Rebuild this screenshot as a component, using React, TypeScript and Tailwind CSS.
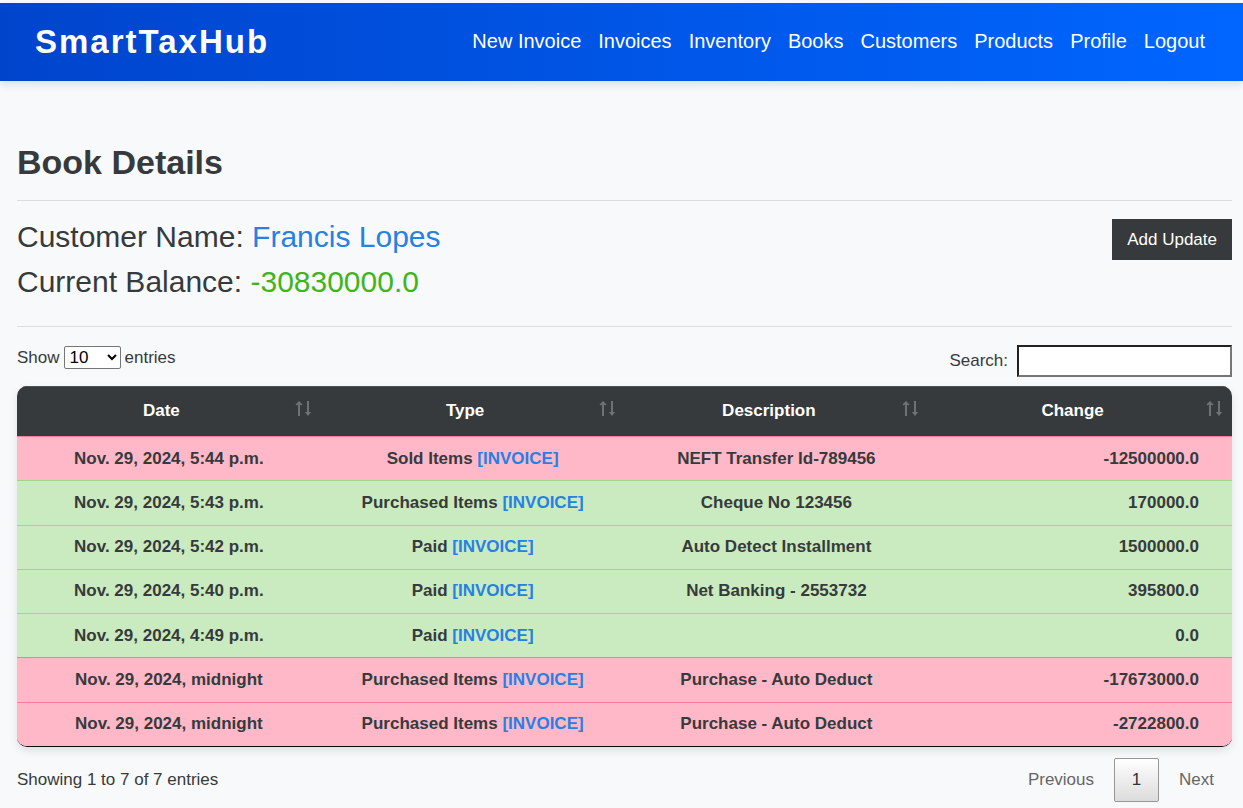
import React from "react";

const navLinks = [
  "New Invoice",
  "Invoices",
  "Inventory",
  "Books",
  "Customers",
  "Products",
  "Profile",
  "Logout",
];

type Entry = {
  date: string;
  type: string;
  description: string;
  change: string;
  tone: "danger" | "success";
};

const entries: Entry[] = [
  { date: "Nov. 29, 2024, 5:44 p.m.", type: "Sold Items", description: "NEFT Transfer Id-789456", change: "-12500000.0", tone: "danger" },
  { date: "Nov. 29, 2024, 5:43 p.m.", type: "Purchased Items", description: "Cheque No 123456", change: "170000.0", tone: "success" },
  { date: "Nov. 29, 2024, 5:42 p.m.", type: "Paid", description: "Auto Detect Installment", change: "1500000.0", tone: "success" },
  { date: "Nov. 29, 2024, 5:40 p.m.", type: "Paid", description: "Net Banking - 2553732", change: "395800.0", tone: "success" },
  { date: "Nov. 29, 2024, 4:49 p.m.", type: "Paid", description: "", change: "0.0", tone: "success" },
  { date: "Nov. 29, 2024, midnight", type: "Purchased Items", description: "Purchase - Auto Deduct", change: "-17673000.0", tone: "danger" },
  { date: "Nov. 29, 2024, midnight", type: "Purchased Items", description: "Purchase - Auto Deduct", change: "-2722800.0", tone: "danger" },
];

const rowTone = {
  danger: "bg-[#ffb8c8] *:border-[#ff7a98]",
  success: "bg-[#c9ebbf] *:border-[#9bd986]",
};

function SortIcon() {
  return (
    <svg width="16" height="16" viewBox="0 0 16 16" className="text-[#6f7173]" aria-hidden="true">
      <path d="M3 2h2v13H3zM12 0h2v12h-2z" fill="currentColor" />
      <path d="M4 0 7.5 3.5 6.6 4.4 4 3 1.4 4.4 0.5 3.5zM9.8 11h6.4L13 15z" fill="currentColor" />
    </svg>
  );
}

function HeaderCell({ label }: { label: string }) {
  return (
    <th scope="col" className="relative h-[50px] w-1/4 border-t border-[#4b5154] pb-0.5 pl-2 pr-[23px] text-center align-middle font-bold">
      {label}
      <button type="button" aria-label={`Sort by ${label}`} className="absolute right-2.5 top-3.5">
        <SortIcon />
      </button>
    </th>
  );
}

export default function App() {
  return (
    <div className="min-h-screen bg-[#f8f9fb] pt-[3px] font-['Liberation_Sans',Arial,sans-serif] text-[17px] leading-6 text-[#373a3c]">
      <header className="flex items-center justify-between bg-[linear-gradient(90deg,#0044cc,#0066ff)] py-[15px] pl-[35px] pr-[38px] text-white shadow-[0_4px_8px_rgba(0,0,0,0.1)]">
        <a href="#" className="text-[33px] font-bold leading-12 tracking-[2px]">
          SmartTaxHub
        </a>
        <nav className="flex gap-[17px] pb-0.5 text-xl leading-7">
          {navLinks.map((label) => (
            <a key={label} href="#">
              {label}
            </a>
          ))}
        </nav>
      </header>

      <main className="pb-1.5 pl-[17px] pr-[11px] pt-[60px]">
        <h1 className="text-[34px] font-bold leading-[42px]">Book Details</h1>
        <hr className="mt-[17px] border-[#dbdddf]" />

        <section className="mt-[18px] flex items-start justify-between">
          <div className="text-[30px] leading-9">
            <p>
              Customer Name: <span className="text-[#2780e3]">Francis Lopes</span>
            </p>
            <p className="mt-[9px]">
              Current Balance: <span className="text-[#3fb618]">-30830000.0</span>
            </p>
          </div>
          <button type="button" className="bg-[#373a3c] px-[15px] py-2 leading-[25px] text-white">
            Add Update
          </button>
        </section>
        <hr className="mt-[26px] border-[#dbdddf]" />

        <div className="mt-[18px] flex items-start justify-between">
          <label className="flex items-center gap-1 leading-[25px]">
            Show
            <select className="h-[23px] w-[57px] rounded-xs border border-[#767676] bg-white pl-px text-black" defaultValue="10">
              <option>10</option>
              <option>25</option>
              <option>50</option>
              <option>100</option>
            </select>
            entries
          </label>
          <label className="flex items-center gap-[9px]">
            Search:
            <input
              type="search"
              className="h-8 w-[215px] border-2 border-b-[#767676] border-l-[#212121] border-r-[#767676] border-t-[#212121] bg-white px-1"
            />
          </label>
        </div>

        <div className="mt-[9px] overflow-hidden rounded-[10px] border-b border-[#111111] shadow-[0_4px_8px_rgba(0,0,0,0.1)]">
          <table className="h-[360px] w-full table-fixed border-separate border-spacing-0 font-bold">
            <thead className="bg-[#373a3c] text-white">
              <tr>
                <HeaderCell label="Date" />
                <HeaderCell label="Type" />
                <HeaderCell label="Description" />
                <HeaderCell label="Change" />
              </tr>
            </thead>
            <tbody>
              {entries.map((entry, i) => (
                <tr key={i} className={`text-center *:border-t *:py-2 ${rowTone[entry.tone]}`}>
                  <td>{entry.date}</td>
                  <td>
                    {entry.type}{" "}
                    <a href="#" className="text-[#2780e3]">
                      [INVOICE]
                    </a>
                  </td>
                  <td>{entry.description}</td>
                  <td className="pr-[33px] text-right">{entry.change}</td>
                </tr>
              ))}
            </tbody>
          </table>
        </div>

        <footer className="mt-[11px] flex items-center justify-between">
          <p>Showing 1 to 7 of 7 entries</p>
          <nav aria-label="Pagination" className="flex items-center text-[#666666]">
            <button type="button" className="px-[18px]">
              Previous
            </button>
            <button
              type="button"
              aria-current="page"
              className="mx-0.5 h-11 w-[45px] rounded-xs border border-[#979797] bg-linear-to-b from-white to-[#dcdcdc] text-[#333333]"
            >
              1
            </button>
            <button type="button" className="px-[18px]">
              Next
            </button>
          </nav>
        </footer>
      </main>
    </div>
  );
}
